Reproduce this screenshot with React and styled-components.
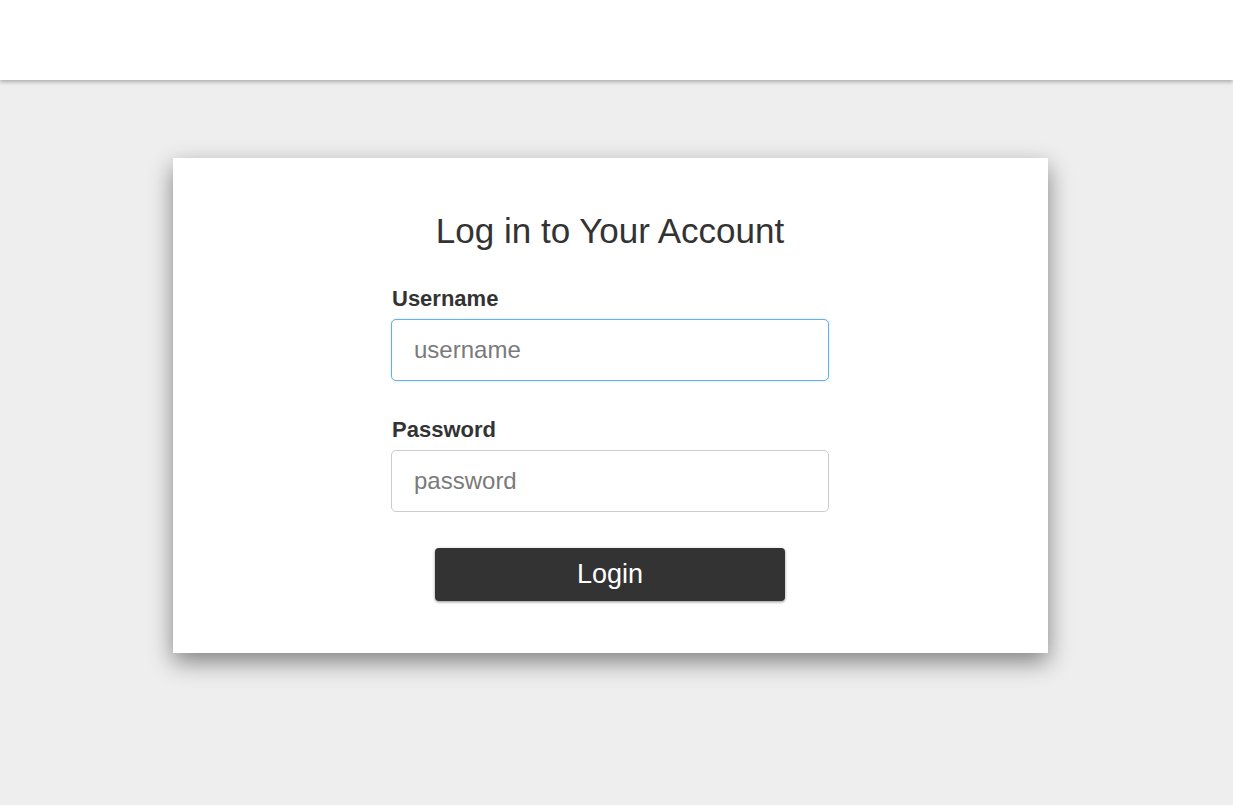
import React from 'react'
import styled, {createGlobalStyle} from 'styled-components'

const GlobalStyle = createGlobalStyle`
    html, body {
        margin: 0;
        padding: 0;
        background: #eeeeee;
        font-family: "Liberation Sans", Arial, Helvetica, sans-serif;
        color: #333333;
    }
    * {
        box-sizing: border-box;
    }
`

const Page = styled.div`
    min-height: 805px;
    background: #eeeeee;
`

const TopBar = styled.header`
    background: #ffffff;
    box-shadow: 0 2px 4px rgba(0, 0, 0, 0.28);
    height: 80px;
    position: relative;
    z-index: 1;
`

const Main = styled.main`
    display: flex;
    justify-content: center;
    padding: 78px 12px 0 0;
`

const Card = styled.section`
    background: #ffffff;
    box-shadow: 0 9px 22px rgba(0, 0, 0, 0.45);
    display: flex;
    flex-direction: column;
    align-items: center;
    padding: 54px 1px 52px 0;
    width: 875px;
`

const Title = styled.h1`
    font-size: 35px;
    font-weight: 400;
    line-height: 38px;
    margin: 0 0 36px;
`

const Form = styled.form`
    display: flex;
    flex-direction: column;
    align-items: center;
    width: 438px;
`

const Field = styled.div`
    display: flex;
    flex-direction: column;
    margin-bottom: ${props => props.$gap}px;
    width: 100%;
`

const Label = styled.label`
    font-size: 22px;
    font-weight: 700;
    line-height: 25px;
    margin: 0 0 8px 1px;
`

const Input = styled.input`
    border: 1px solid ${props => props.$active ? '#66afe9' : '#cccccc'};
    border-radius: 5px;
    box-shadow: ${props => props.$active ? '0 0 2px rgba(102, 175, 233, 0.45)' : 'none'};
    color: #333333;
    font-family: inherit;
    font-size: 24px;
    height: 62px;
    outline: none;
    padding: 0 22px;
    width: 100%;

    &::placeholder {
        color: #7a7a7a;
    }
`

const LoginButton = styled.button`
    background: #333333;
    border: none;
    border-radius: 4px;
    box-shadow: 0 1px 3px rgba(0, 0, 0, 0.45);
    color: #ffffff;
    cursor: pointer;
    font-family: inherit;
    font-size: 27px;
    height: 53px;
    padding: 0;
    width: 350px;
`

const App = () => {
    return (
        <Page>
            <GlobalStyle />
            <TopBar />
            <Main>
                <Card>
                    <Title>Log in to Your Account</Title>
                    <Form onSubmit={e => e.preventDefault()}>
                        <Field $gap={36}>
                            <Label htmlFor="username">Username</Label>
                            <Input id="username" placeholder="username" $active />
                        </Field>
                        <Field $gap={36}>
                            <Label htmlFor="password">Password</Label>
                            <Input id="password" type="password" placeholder="password" />
                        </Field>
                        <LoginButton type="submit">Login</LoginButton>
                    </Form>
                </Card>
            </Main>
        </Page>
    )
}

export default App
